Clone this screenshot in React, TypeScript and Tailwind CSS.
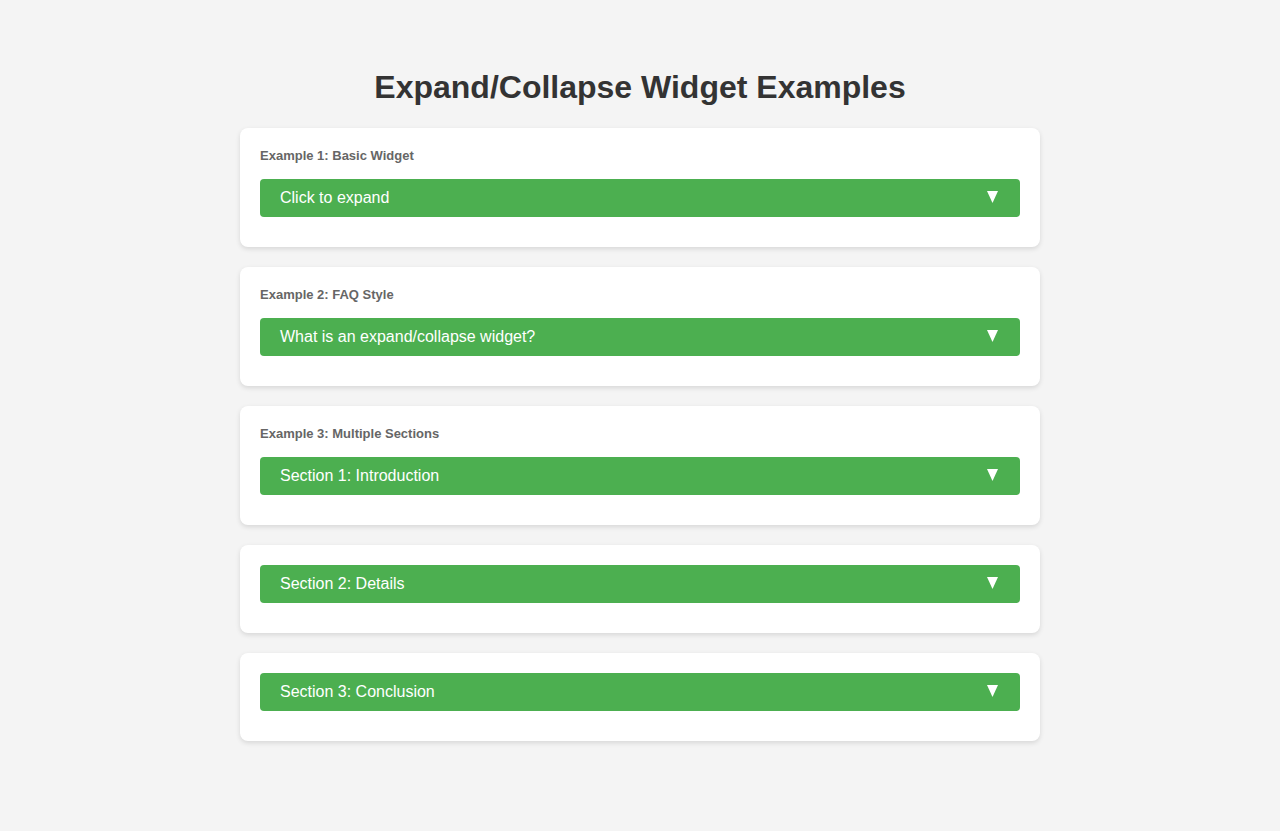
import React from "react";

type Item = { label?: string; text: string };

const items: Item[] = [
  { label: "Example 1: Basic Widget", text: "Click to expand" },
  { label: "Example 2: FAQ Style", text: "What is an expand/collapse widget?" },
  { label: "Example 3: Multiple Sections", text: "Section 1: Introduction" },
  { text: "Section 2: Details" },
  { text: "Section 3: Conclusion" },
];

export default function App() {
  return (
    <div
      className="min-h-[831px] bg-[#f4f4f4] pt-[69px]"
      style={{ fontFamily: '"Liberation Sans", Arial, Helvetica, sans-serif' }}
    >
      <div className="mx-auto w-[800px]">
        <h1 className="mb-[22px] text-center text-[32px] font-bold leading-[37px] text-[#333]">
          Expand/Collapse Widget Examples
        </h1>
        <div className="flex flex-col gap-5">
          {items.map((it, i) => (
            <div
              key={i}
              className="rounded-lg bg-white px-5 pt-5 pb-[20px] shadow-[0_2px_5px_rgba(0,0,0,0.12)]"
            >
              {it.label && (
                <div className="mb-[15px] text-[13px] font-bold leading-4 text-[#666]">
                  {it.label}
                </div>
              )}
              <div className="mb-[10px]">
                <button className="flex h-[38px] w-full items-center justify-between rounded bg-[#4caf50] pl-5 pr-[22px] text-left text-[16px] text-white">
                  <span>{it.text}</span>
                  <svg width="11" height="12" viewBox="0 0 11 12" className="mb-[3px]">
                    <polygon points="0,0 11,0 5.5,12" fill="#fff" />
                  </svg>
                </button>
              </div>
            </div>
          ))}
        </div>
      </div>
    </div>
  );
}
